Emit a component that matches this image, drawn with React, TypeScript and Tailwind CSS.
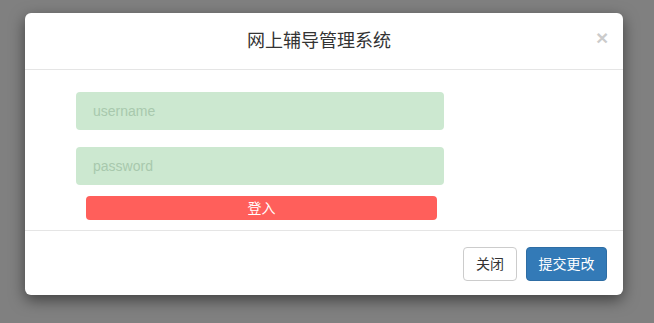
import { useState } from "react";

const font = { fontFamily: '"Liberation Sans", "Noto Sans CJK SC", sans-serif' };

const App = () => {
  const [form, setForm] = useState({ username: "", password: "" });

  return (
    <div className="w-[654px] h-[323px] bg-[#808080] pt-[13px] pl-[25px] overflow-hidden" style={font}>
      <div className="w-[598px] h-[282px] bg-white rounded-[6px] shadow-[0_5px_15px_rgba(0,0,0,0.5)] flex flex-col">
        {/* header */}
        <div className="h-[57px] border-b border-[#e5e5e5] px-[15px] flex items-center">
          <h4 className="flex-1 text-center text-[18px] text-[#333] leading-[26px] ml-[2px]">网上辅导管理系统</h4>
          <button className="w-[12px] text-[21px] font-bold leading-none text-black opacity-20 -mt-[7px]">×</button>
        </div>

        {/* body */}
        <div className="h-[160px] pt-[22px] pl-[51px] flex flex-col">
          <input
            className="w-[368px] h-[38px] rounded-[4px] bg-[#cce8d0] pl-[17px] text-[14px] text-[#555] placeholder:text-[#a8c8ad] outline-none"
            placeholder="username"
            value={form.username}
            onChange={(e) => setForm({ ...form, username: e.target.value })}
          />
          <input
            type="password"
            className="w-[368px] h-[38px] mt-[17px] rounded-[4px] bg-[#cce8d0] pl-[17px] text-[14px] text-[#555] placeholder:text-[#a8c8ad] outline-none"
            placeholder="password"
            value={form.password}
            onChange={(e) => setForm({ ...form, password: e.target.value })}
          />
          <button className="w-[351px] h-[24px] mt-[11px] ml-[10px] rounded-[4px] bg-[#ff5f5b] text-white text-[14px] leading-[24px]">
            登入
          </button>
        </div>

        {/* footer */}
        <div className="flex-1 border-t border-[#e5e5e5] flex justify-end items-start pt-[16px] pr-[16px] gap-[9px]">
          <button className="w-[54px] h-[34px] rounded-[4px] border border-[#ccc] bg-white text-[14px] text-[#333]">关闭</button>
          <button className="w-[81px] h-[34px] rounded-[4px] border border-[#2e6da4] bg-[#337ab7] text-[14px] text-white">提交更改</button>
        </div>
      </div>
    </div>
  );
};

export default App;
